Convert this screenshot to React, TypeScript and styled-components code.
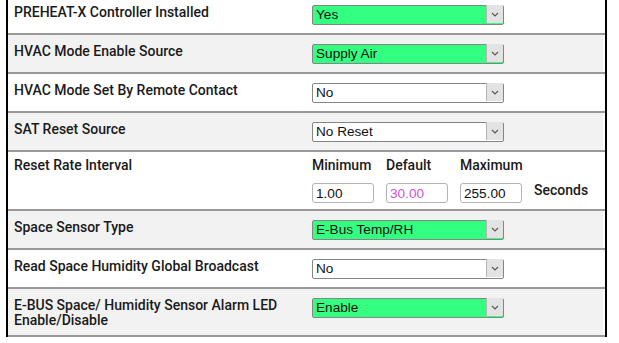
import styled, { createGlobalStyle } from 'styled-components';

const GlobalStyle = createGlobalStyle`
  html, body {
    margin: 0;
    padding: 0;
    background: #fff;
    overflow: hidden;
  }
  body {
    font-family: Roboto, "Liberation Sans", sans-serif;
  }
`;

type Row =
  | { label: string; kind: 'select'; value: string; on?: boolean }
  | { label: string; kind: 'range' };

const rows: Row[] = [
  { label: 'PREHEAT-X Controller Installed', kind: 'select', value: 'Yes', on: true },
  { label: 'HVAC Mode Enable Source', kind: 'select', value: 'Supply Air', on: true },
  { label: 'HVAC Mode Set By Remote Contact', kind: 'select', value: 'No' },
  { label: 'SAT Reset Source', kind: 'select', value: 'No Reset' },
  { label: 'Reset Rate Interval', kind: 'range' },
  { label: 'Space Sensor Type', kind: 'select', value: 'E-Bus Temp/RH', on: true },
  { label: 'Read Space Humidity Global Broadcast', kind: 'select', value: 'No' },
  { label: 'E-BUS Space/ Humidity Sensor Alarm LED Enable/Disable', kind: 'select', value: 'Enable', on: true },
];

export default function App() {
  return (
    <>
      <GlobalStyle />
      <Table>
        {rows.map((row, i) => (
          <TableRow key={i} $shaded={i % 2 === 1} $tall={i === 7}>
            <Label $range={row.kind === 'range'}>{row.label}</Label>
            {row.kind === 'select' ? (
              <Value>
                <Dropdown value={row.value} on={row.on} />
              </Value>
            ) : (
              <RangeGrid>
                <RangeHead>Minimum</RangeHead>
                <RangeHead>Default</RangeHead>
                <RangeHead>Maximum</RangeHead>
                <span />
                <NumberBox defaultValue="1.00" />
                <NumberBox defaultValue="30.00" $muted />
                <NumberBox defaultValue="255.00" />
                <Units>Seconds</Units>
              </RangeGrid>
            )}
          </TableRow>
        ))}
      </Table>
    </>
  );
}

function Dropdown({ value, on }: { value: string; on?: boolean }) {
  return (
    <SelectWrap>
      <Select $on={on} defaultValue={value}>
        <option>{value}</option>
      </Select>
      <Arrow>
        <svg width="8" height="5" viewBox="0 0 8 5">
          <path d="M1 1l3 3 3-3" fill="none" stroke="#555" strokeWidth="1.1" />
        </svg>
      </Arrow>
    </SelectWrap>
  );
}

const Table = styled.div`
  margin: -4px 0 0 6px;
  width: 597px;
  border-left: 2px solid #000;
  border-right: 2px solid #000;
`;

const TableRow = styled.div<{ $shaded: boolean; $tall: boolean }>`
  display: grid;
  grid-template-columns: 298px 1fr;
  min-height: ${(p) => (p.$tall ? 46 : 37)}px;
  background: ${(p) => (p.$shaded ? '#f2f2f2' : '#fff')};
  box-shadow: inset -2px 0 0 #fff;
  border-bottom: 2px solid #999;
`;

const Label = styled.div<{ $range?: boolean }>`
  padding: ${(p) => (p.$range ? 6 : 9)}px 6px 0;
  font-size: 14px;
  font-weight: 500;
  line-height: 15px;
  color: #1a1a1a;
`;

const Value = styled.div`
  padding: 8px 6px 6px 6px;
`;

const SelectWrap = styled.div`
  position: relative;
  width: 192px;
  height: 20px;
`;

const Select = styled.select<{ $on?: boolean }>`
  appearance: none;
  width: 100%;
  height: 100%;
  box-sizing: border-box;
  margin: 0;
  padding: 0 20px 0 3px;
  border: 1px solid #858585;
  border-radius: 2px;
  background: ${(p) => (p.$on ? '#33ff80' : '#fff')};
  font-family: "Liberation Sans", Arial, sans-serif;
  font-size: 13.6px;
  color: #111;
  outline: none;
`;

const Arrow = styled.span`
  position: absolute;
  top: 1px;
  right: 1px;
  bottom: 1px;
  width: 16px;
  display: flex;
  align-items: center;
  justify-content: center;
  background: #e3e3e3;
  border-left: 1px solid #b5b5b5;
  border-radius: 0 1px 1px 0;
  pointer-events: none;
`;

const RangeGrid = styled.div`
  display: grid;
  grid-template-columns: 62px 62px 62px auto;
  grid-template-rows: 15px 20px;
  column-gap: 12px;
  row-gap: 10px;
  padding: 6px 6px 6px;
`;

const RangeHead = styled.span`
  font-size: 14px;
  font-weight: 500;
  line-height: 15px;
  color: #1a1a1a;
  white-space: nowrap;
`;

const NumberBox = styled.input<{ $muted?: boolean }>`
  box-sizing: border-box;
  width: 62px;
  height: 20px;
  margin: 0;
  padding: 0 3px;
  border: 1px solid #b3b3b3;
  border-radius: 3px;
  font-family: "Liberation Sans", Arial, sans-serif;
  font-size: 13.6px;
  color: ${(p) => (p.$muted ? '#cc55dd' : '#111')};
  background: #fff;
  outline: none;
`;

const Units = styled.span`
  align-self: center;
  font-size: 14px;
  font-weight: 500;
  line-height: 15px;
  color: #1a1a1a;
  margin-top: -6px;
`;
